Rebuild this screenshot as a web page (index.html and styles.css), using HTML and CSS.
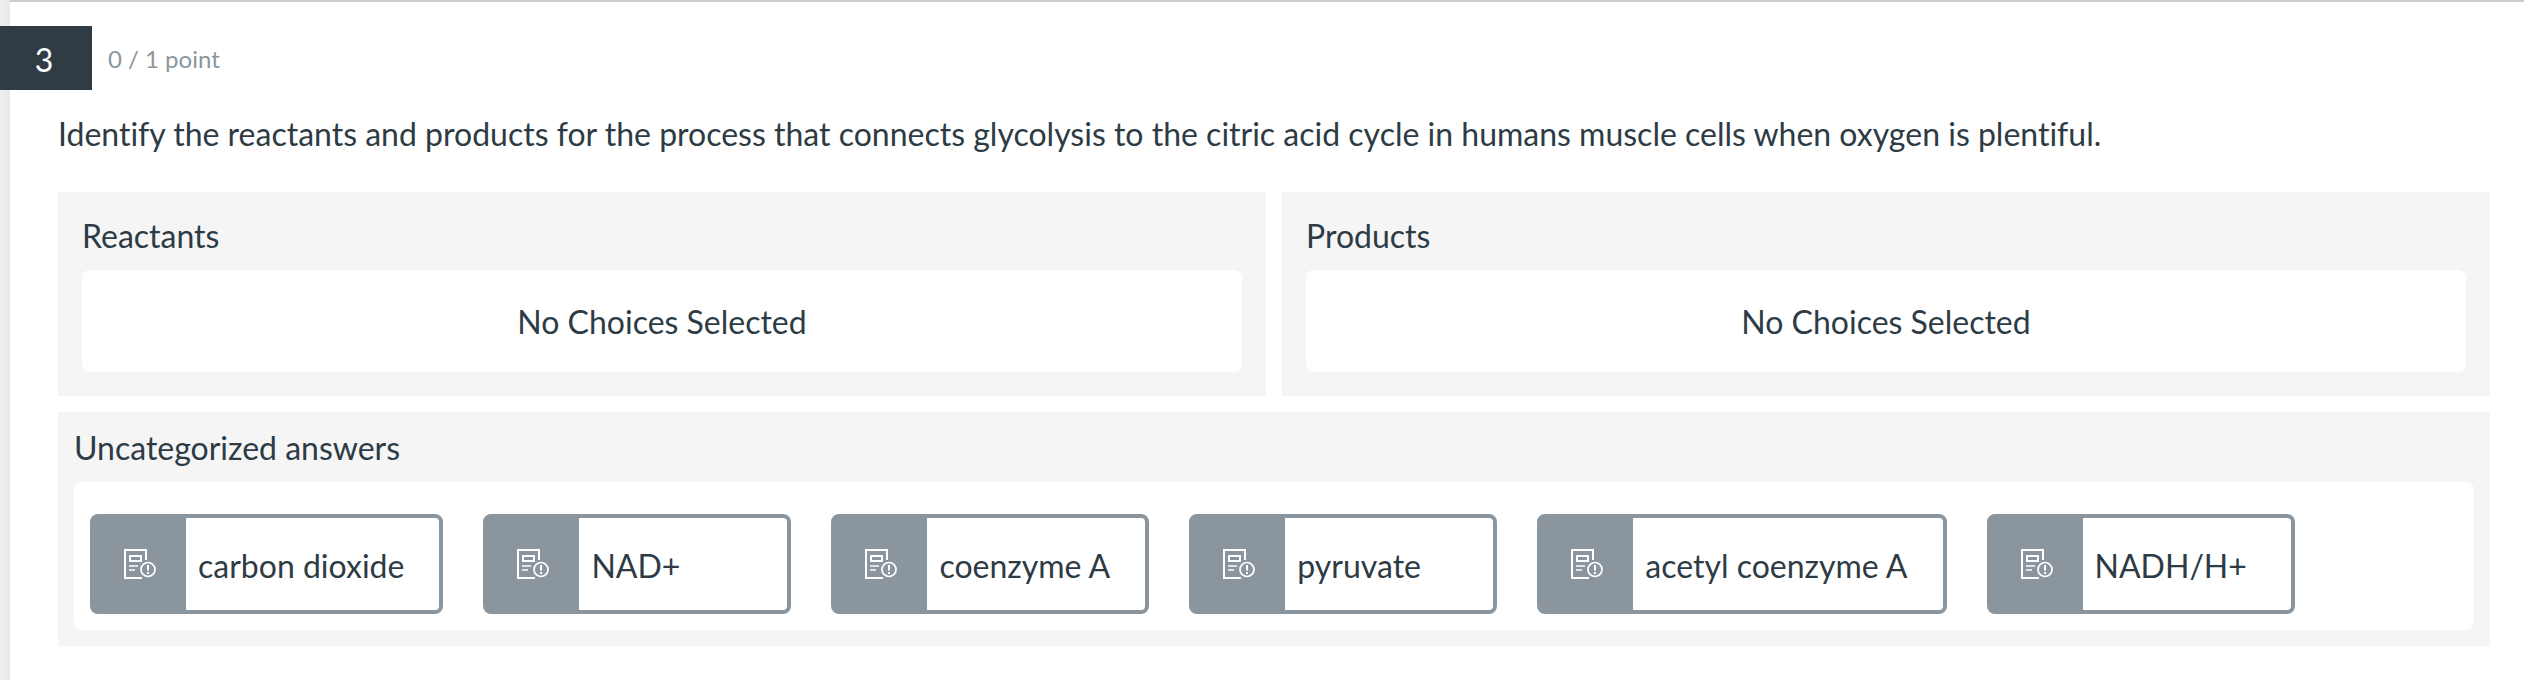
FILE: index.html
```
<!DOCTYPE html>
<html lang="en">
<head>
  <meta charset="UTF-8">
  <meta name="viewport" content="width=device-width, initial-scale=1">
  <title>Question 3</title>
  <link rel="stylesheet" href="styles.css">
</head>
<body>

<svg class="sprite" aria-hidden="true">
  <symbol id="icon-note" viewBox="0 0 32 32">
    <g fill="none" stroke="#fff" stroke-width="2">
      <path d="M18 30H1V2h21v10"/>
      <path d="M6 8h11v5H6z"/>
      <path d="M5 18h9M5 22h6" stroke-width="1.5"/>
      <circle cx="24" cy="21.5" r="7" stroke-width="1.7"/>
      <path d="M24 17v5.5M24 24v2"/>
    </g>
  </symbol>
</svg>

<main class="question">
  <header class="question-header">
    <span class="number">3</span>
    <span class="points">0 / 1 point</span>
  </header>

  <div class="question-body">
    <p class="prompt">Identify the reactants and products for the process that connects glycolysis to the citric acid cycle in humans muscle cells when oxygen is plentiful.</p>

    <div class="categories">
      <section class="category">
        <h2>Reactants</h2>
        <div class="drop-area">No Choices Selected</div>
      </section>
      <section class="category">
        <h2>Products</h2>
        <div class="drop-area">No Choices Selected</div>
      </section>
    </div>

    <section class="uncategorized">
      <h2>Uncategorized answers</h2>
      <ul class="answers">
        <li class="answer">
          <span class="handle"><svg><use href="#icon-note"/></svg></span>
          <span class="label">carbon dioxide</span>
        </li>
        <li class="answer">
          <span class="handle"><svg><use href="#icon-note"/></svg></span>
          <span class="label">NAD+</span>
        </li>
        <li class="answer">
          <span class="handle"><svg><use href="#icon-note"/></svg></span>
          <span class="label">coenzyme A</span>
        </li>
        <li class="answer">
          <span class="handle"><svg><use href="#icon-note"/></svg></span>
          <span class="label">pyruvate</span>
        </li>
        <li class="answer">
          <span class="handle"><svg><use href="#icon-note"/></svg></span>
          <span class="label">acetyl coenzyme A</span>
        </li>
        <li class="answer">
          <span class="handle"><svg><use href="#icon-note"/></svg></span>
          <span class="label">NADH/H+</span>
        </li>
      </ul>
    </section>
  </div>
</main>

</body>
</html>
```
FILE: styles.css
```
* {
  box-sizing: border-box;
}
body {
  margin: 0;
  padding-left: 10px;
  min-height: 100vh;
  display: flex;
  font-family: Lato, "Liberation Sans", sans-serif;
  font-size: 32px;
  line-height: 48px;
  font-variant-ligatures: none;
  color: #2d3b45;
  background: linear-gradient(to right, #f0f0f0, #e8e8e8 10px);
}
h2,
p,
ul {
  margin: 0;
  padding: 0;
}
h2 {
  font-size: 32px;
  font-weight: 400;
  margin-bottom: 10px;
}
.sprite {
  display: none;
}
.question {
  flex: 1;
  min-width: 0;
  background: #fff;
  border-top: 2px solid #c7cdd1;
  padding-top: 24px;
}
.question-header {
  display: flex;
  align-items: center;
  gap: 16px;
  margin-left: -10px;
}
.number {
  width: 92px;
  height: 64px;
  padding: 10px 4px 0 0;
  text-align: center;
  color: #fff;
  background: #303b44;
}
.points {
  padding-top: 2px;
  font-size: 24px;
  color: #8b969e;
}
.question-body {
  padding: 20px 34px 34px 48px;
}
.prompt {
  margin-bottom: 34px;
}
.categories {
  display: grid;
  grid-template-columns: 1fr 1fr;
  gap: 16px;
  margin-bottom: 16px;
}
.category {
  padding: 20px 24px 24px;
  background: #f5f5f5;
}
.drop-area {
  padding: 28px 24px 26px;
  text-align: center;
  background: #fff;
  border-radius: 8px;
}
.uncategorized {
  padding: 12px 16px 16px;
  background: #f5f5f5;
}
.answers {
  display: flex;
  flex-wrap: wrap;
  gap: 32px 40px;
  padding: 32px 16px 16px;
  list-style: none;
  background: #fff;
  border-radius: 8px;
}
.answer {
  display: flex;
  min-width: 308px;
  height: 100px;
  border: 4px solid #8b959e;
  border-radius: 8px;
}
.handle {
  display: flex;
  align-items: center;
  width: 92px;
  padding-left: 30px;
  background: #8b959e;
}
.handle svg {
  width: 32px;
  height: 32px;
}
.label {
  padding: 24px 35px 0 12px;
}
```
